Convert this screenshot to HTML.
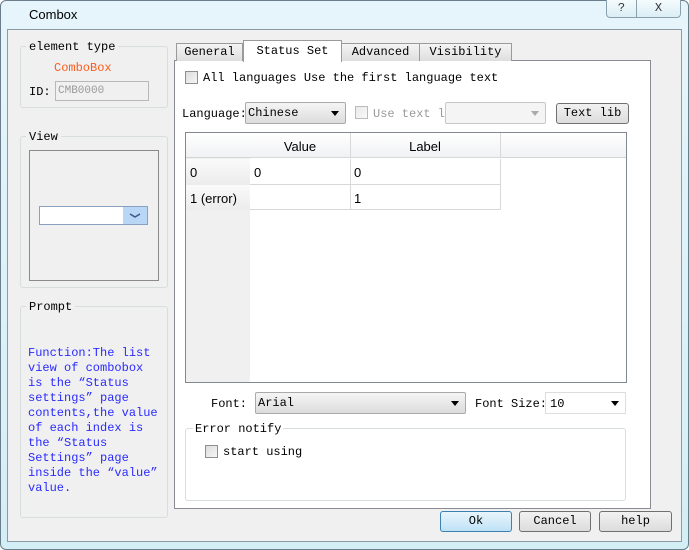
<!DOCTYPE html>
<html><head><style>
*{box-sizing:border-box;margin:0;padding:0}
body{width:689px;height:550px;background:#fff;position:relative;overflow:hidden;font-family:"Liberation Mono","Noto Sans CJK SC",monospace;font-size:12px;color:#000}
.a{position:absolute}
.win{left:0;top:0;width:689px;height:550px;border:1px solid #6a7d8a;border-radius:6px;background:linear-gradient(#e6f5fb,#d4eef6);}
.client{left:7px;top:29px;width:675px;height:513px;background:#f0f0f0;border:1px solid #8b9aa4}
.grp{border:1px solid #d8dde0;border-radius:3px}
.lbl{background:#f0f0f0;padding:0 3px;font-size:12px}
.btn{border:1px solid #707070;border-radius:3px;background:linear-gradient(#f2f2f2,#dcdcdc);text-align:center;font-size:12px;line-height:19px}
.cb{width:13px;height:13px;border:1px solid #8e8f8f;background:linear-gradient(135deg,#dcdcdc,#f6f6f6)}
.tab{border:1px solid #9a9a9a;border-bottom:none;background:linear-gradient(#f4f4f4,#dedede);text-align:center;font-size:12px;line-height:17px}
.sel{border:1px solid #aaa;border-radius:2px;background:linear-gradient(#f5f5f5,#dcdcdc);font-size:12px;padding-left:2px;line-height:20px}
.tri{position:absolute;right:6px;top:8px;border-left:4px solid transparent;border-right:4px solid transparent;border-top:5px solid #000;width:0;height:0}
.cell{position:absolute;font-family:"Liberation Sans",sans-serif;font-size:13px;line-height:27px;padding-left:4px;border-right:1px solid #d8d8d8;border-bottom:1px solid #d8d8d8}
</style></head><body>
<div class="a win"></div>
<div class="a" style="left:29px;top:7px;font-family:'Liberation Sans',sans-serif;font-size:13px">Combox</div>
<div class="a" style="left:606px;top:0;width:31px;height:18px;border:1px solid #8ba0ad;border-top:none;border-radius:0 0 0 4px;background:linear-gradient(#f4fbfd,#dbeef5);text-align:center;font-size:12px;line-height:17px;color:#333">?</div>
<div class="a" style="left:636px;top:0;width:45px;height:18px;border:1px solid #8ba0ad;border-top:none;border-radius:0 0 4px 0;background:linear-gradient(#f4fbfd,#dbeef5);text-align:center;font-size:12px;line-height:17px;color:#333">X</div>
<div class="a client"></div>

<div class="a grp" style="left:20px;top:46px;width:148px;height:62px"></div>
<div class="a lbl" style="left:26px;top:40px">element type</div>
<div class="a" style="left:54px;top:61px;color:#ff5a1e">ComboBox</div>
<div class="a" style="left:29px;top:85px">ID:</div>
<div class="a" style="left:55px;top:81px;width:94px;height:20px;border:1px solid #b8b8b8;color:#9a9a9a;line-height:18px;padding-left:2px;font-size:11px">CMB0000</div>

<div class="a grp" style="left:20px;top:136px;width:148px;height:152px"></div>
<div class="a lbl" style="left:26px;top:130px">View</div>
<div class="a" style="left:29px;top:150px;width:130px;height:131px;border:1px solid #8a8a8a"></div>
<div class="a" style="left:39px;top:206px;width:109px;height:19px;border:1px solid #8aa0c0;background:#fff"></div>
<div class="a" style="left:123px;top:207px;width:24px;height:17px;background:#b9d6f7"><svg width="24" height="17"><path d="M7 7 L12 10 L17 7" stroke="#3a5a88" stroke-width="1.6" fill="none"/></svg></div>

<div class="a grp" style="left:20px;top:306px;width:148px;height:212px"></div>
<div class="a lbl" style="left:26px;top:300px">Prompt</div>
<div class="a" style="left:28px;top:346px;width:140px;color:#2a2aff;line-height:15px;white-space:pre">Function:The list
view of combobox
is the “Status
settings” page
contents,the value
of each index is
the “Status
Settings” page
inside the “value”
value.</div>

<div class="a" style="left:174px;top:60px;width:477px;height:449px;background:#fff;border:1px solid #898c95"></div>
<div class="a tab" style="left:176px;top:43px;width:67px;height:18px">General</div>
<div class="a tab" style="left:341px;top:43px;width:79px;height:18px">Advanced</div>
<div class="a tab" style="left:419px;top:43px;width:93px;height:18px">Visibility</div>
<div class="a tab" style="left:243px;top:40px;width:99px;height:22px;background:#fff;line-height:20px">Status Set</div>

<div class="a cb" style="left:185px;top:71px"></div>
<div class="a" style="left:203px;top:71px">All languages Use the first language text</div>

<div class="a" style="left:182px;top:107px">Language:</div>
<div class="a sel" style="left:245px;top:102px;width:101px;height:22px">Chinese<span class="tri"></span></div>
<div class="a cb" style="left:355px;top:106px;opacity:.6"></div>
<div class="a" style="left:373px;top:107px;color:#9a9a9a">Use text li</div>
<div class="a" style="left:445px;top:102px;width:101px;height:22px;border:1px solid #c8c8c8;border-radius:2px;background:#f4f4f4"><span class="tri" style="border-top-color:#aaa"></span></div>
<div class="a btn" style="left:556px;top:103px;width:73px;height:21px">Text lib</div>

<div class="a" style="left:185px;top:132px;width:442px;height:251px;border:1px solid #828790;background:#fff"></div>
<div class="a" style="left:186px;top:133px;width:440px;height:25px;background:linear-gradient(#fff,#f1f2f4);border-bottom:1px solid #d5d5d5"></div>
<div class="a" style="left:186px;top:158px;width:64px;height:224px;background:#f0f0f0"></div>
<div class="cell" style="left:250px;top:133px;width:101px;height:25px;text-align:center;padding:0">Value</div>
<div class="cell" style="left:350px;top:133px;width:151px;height:25px;text-align:center;padding:0">Label</div>
<div class="cell" style="left:186px;top:159px;width:64px;height:26px;border:none;background:linear-gradient(#fafafa,#ececec)">0</div>
<div class="cell" style="left:186px;top:185px;width:64px;height:25px;border:none;background:linear-gradient(#fafafa,#ececec)">1 (error)</div>
<div class="cell" style="left:250px;top:159px;width:101px;height:26px">0</div>
<div class="cell" style="left:350px;top:159px;width:151px;height:26px">0</div>
<div class="cell" style="left:250px;top:185px;width:101px;height:25px"></div>
<div class="cell" style="left:350px;top:185px;width:151px;height:25px">1</div>

<div class="a" style="left:211px;top:397px">Font:</div>
<div class="a sel" style="left:255px;top:392px;width:211px;height:22px">Arial<span class="tri"></span></div>
<div class="a" style="left:475px;top:397px">Font Size:</div>
<div class="a" style="left:545px;top:392px;width:81px;height:22px;border:1px solid #ddd;background:#fff;line-height:22px;padding-left:4px">10<span class="tri"></span></div>

<div class="a grp" style="left:185px;top:428px;width:441px;height:73px"></div>
<div class="a" style="left:193px;top:422px;background:#fff;padding:0 2px">Error notify</div>
<div class="a cb" style="left:205px;top:445px"></div>
<div class="a" style="left:223px;top:445px">start using</div>

<div class="a btn" style="left:440px;top:511px;width:72px;height:21px;border-color:#3c7fb1;background:linear-gradient(#e8f5fc,#bfe2f6)">Ok</div>
<div class="a btn" style="left:519px;top:511px;width:72px;height:21px">Cancel</div>
<div class="a btn" style="left:599px;top:511px;width:73px;height:21px">help</div>
</body></html>
